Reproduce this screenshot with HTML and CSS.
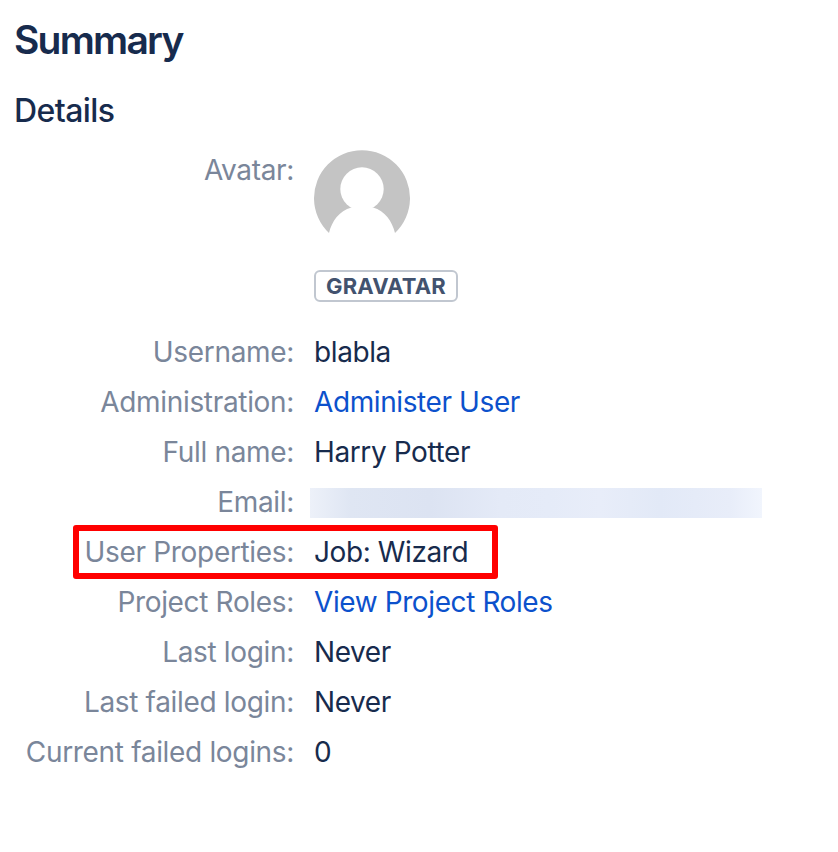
FILE: index.html
```html
<!DOCTYPE html>
<html lang="en">
<head>
  <meta charset="utf-8">
  <title>Summary</title>
  <link rel="stylesheet" href="styles.css">
</head>
<body>
  <div class="profile">
    <h1 class="title">Summary</h1>
    <h2 class="subtitle">Details</h2>

    <dl class="details">
      <div class="row row-avatar">
        <dt>Avatar:</dt>
        <dd>
          <svg class="avatar" width="96" height="96" viewBox="0 0 96 96">
            <path d="M15 83A48 48 0 1 1 81 83C78 71 71 61 59 57.500H37.500C25 61 18 71 15 83Z" fill="#c4c4c4"/>
            <circle cx="48" cy="39" r="21.700" fill="#fff"/>
          </svg>
          <span class="badge">Gravatar</span>
        </dd>
      </div>
      <div class="row"><dt>Username:</dt><dd>blabla</dd></div>
      <div class="row"><dt>Administration:</dt><dd><a href="#">Administer User</a></dd></div>
      <div class="row"><dt>Full name:</dt><dd>Harry Potter</dd></div>
      <div class="row"><dt>Email:</dt><dd><span class="hidden-email"></span></dd></div>
      <div class="row row-marked"><dt>User Properties:</dt><dd>Job: Wizard</dd></div>
      <div class="row"><dt>Project Roles:</dt><dd><a href="#">View Project Roles</a></dd></div>
      <div class="row"><dt>Last login:</dt><dd>Never</dd></div>
      <div class="row"><dt>Last failed login:</dt><dd>Never</dd></div>
      <div class="row"><dt>Current failed logins:</dt><dd>0</dd></div>
    </dl>
  </div>
</body>
</html>
```
FILE: styles.css
```css
*,
*::after {
  box-sizing: border-box;
}

body {
  margin: 0;
  background: #fff;
  color: #172b4d;
  font-family: Inter, "Liberation Sans", sans-serif;
  font-size: 28px;
  line-height: 40px;
  letter-spacing: -0.4px;
}

.profile {
  padding: 16px 14px 0;
}

.title {
  margin: 0;
  font-size: 39px;
  font-weight: 600;
  line-height: 47px;
  letter-spacing: -1.75px;
}

.subtitle {
  margin: 28px 0 0;
  font-size: 32px;
  font-weight: 500;
  line-height: 40px;
  letter-spacing: -0.6px;
}

.details {
  margin: 19px 0 0;
}

.row {
  display: flex;
  gap: 20px;
  height: 50px;
}

.row-avatar {
  height: 182px;
}

dt {
  width: 280px;
  color: #7a869a;
  letter-spacing: -0.33px;
  text-align: right;
  white-space: nowrap;
}

dd {
  margin: 0;
}

a {
  color: #0c51cc;
  text-decoration: none;
}

.avatar {
  display: block;
}

.badge {
  display: block;
  width: 144px;
  height: 32px;
  margin-top: 24px;
  border: 2px solid #c1c7d0;
  border-radius: 6px;
  color: #42526e;
  font-size: 22px;
  font-weight: 700;
  line-height: 29px;
  letter-spacing: 0.2px;
  text-align: center;
  text-transform: uppercase;
}

/* blurred out address */
.hidden-email {
  display: block;
  width: 452px;
  height: 30px;
  margin: 6px 0 0 -4px;
  background: linear-gradient(90deg, #edf1f9 0, #dfe6f3 40px, #dce3f2 120px, #e4eaf7 190px, #e5ebf8 240px, #e8edf9 290px, #e2e9f7 350px, #e8edf9 420px, #f1f5fd 452px);
}

/* red frame round the row */
.row-marked {
  position: relative;
}

.row-marked::after {
  content: "";
  position: absolute;
  top: -7px;
  left: 59px;
  width: 425px;
  height: 54px;
  border: 6px solid #f00;
  border-radius: 3px;
}
```
